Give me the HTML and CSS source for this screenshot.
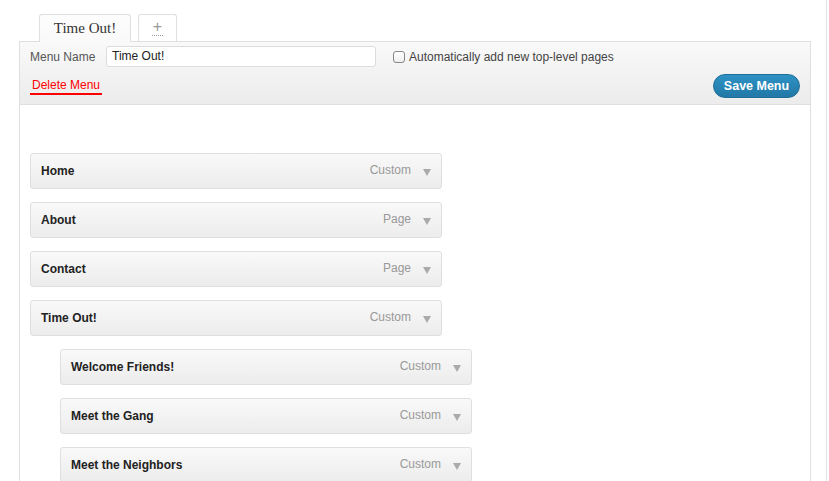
FILE: index.html
```html
<!DOCTYPE html>
<html>
<head>
<meta charset="utf-8">
<link rel="stylesheet" href="styles.css">
</head>
<body>
<div class="page">
  <div class="main">
    <div class="tabs">
      <div class="tab active">Time Out!</div>
      <div class="tab add"><span class="plus">+</span></div>
    </div>
    <div class="panel">
      <div class="header">
        <div class="row1">
          <label class="lbl">Menu Name</label>
          <div class="input">Time Out!</div>
          <span class="check"></span>
          <span class="auto">Automatically add new top-level pages</span>
        </div>
        <div class="row2">
          <span class="delete">Delete Menu</span>
          <span class="save">Save Menu</span>
        </div>
      </div>
      <div class="body">
        <div class="item"><span class="title">Home</span><span class="type">Custom</span><span class="arrow"></span></div>
        <div class="item"><span class="title">About</span><span class="type">Page</span><span class="arrow"></span></div>
        <div class="item"><span class="title">Contact</span><span class="type">Page</span><span class="arrow"></span></div>
        <div class="item"><span class="title">Time Out!</span><span class="type">Custom</span><span class="arrow"></span></div>
        <div class="item sub"><span class="title">Welcome Friends!</span><span class="type">Custom</span><span class="arrow"></span></div>
        <div class="item sub"><span class="title">Meet the Gang</span><span class="type">Custom</span><span class="arrow"></span></div>
        <div class="item sub"><span class="title">Meet the Neighbors</span><span class="type">Custom</span><span class="arrow"></span></div>
      </div>
    </div>
  </div>
  <div class="edge"></div>
</div>
</body>
</html>
```
FILE: styles.css
```css
html, body { margin: 0; padding: 0; background: #fff; }
body { font-family: "Liberation Sans", Arial, sans-serif; font-size: 12px; color: #333; overflow: hidden; }
.page { display: flex; height: 481px; }
.main { width: 826px; padding: 14px 15px 0 19px; box-sizing: border-box; }
.edge { width: 1px; background: #e3e3e3; }
.tabs { display: flex; padding-left: 20px; gap: 7px; height: 27px; position: relative; z-index: 1; }
.tab { box-sizing: border-box; height: 28px; border: 1px solid #dfdfdf; border-bottom: none; border-radius: 3px 3px 0 0; font-family: "Liberation Serif", Georgia, serif; font-size: 15px; color: #333; display: flex; justify-content: center; padding-top: 5px; }
.tab.active { width: 92px; background: linear-gradient(#fdfdfd, #f9f9f9); }
.tab.add { width: 39px; height: 27px; background: #fff; }
.plus { font-family: "Liberation Sans", Arial, sans-serif; color: #999; font-size: 16px; line-height: 14px; border-bottom: 1px dotted #999; height: 15px; padding: 0 1px; }
.panel { border: 1px solid #dfdfdf; border-bottom: none; height: 440px; box-sizing: border-box; }
.header { height: 62px; background: linear-gradient(#f9f9f9, #ececec); border-bottom: 1px solid #dfdfdf; box-sizing: content-box; padding: 0 10px; }
.row1 { display: flex; align-items: center; padding-top: 4px; height: 21px; }
.lbl { color: #555; font-size: 12px; width: 76px; }
.input { box-sizing: border-box; width: 270px; height: 21px; background: #fff; border: 1px solid #dcdcdc; border-radius: 3px; padding: 2px 5px; font-size: 12px; color: #222; line-height: 15px; }
.check { width: 10px; height: 10px; border: 1px solid #888; border-radius: 3px; background: linear-gradient(#fff, #eee); margin-left: 17px; margin-right: 4px; }
.auto { color: #444; font-size: 12px; }
.row2 { display: flex; justify-content: space-between; align-items: center; margin-top: 7px; }
.delete { color: #f00; font-size: 12px; border-bottom: 2px solid #f00; padding: 0 2px 1px; line-height: 14px; }
.save { width: 87px; height: 24px; border-radius: 12px; background: linear-gradient(#2e92c4, #2178a6); border: 1px solid #1f6d99; box-sizing: border-box; color: #fff; font-weight: bold; font-size: 12.5px; display: flex; align-items: center; justify-content: center; margin-top: 0; }
.body { padding: 48px 10px 0; }
.item { width: 412px; height: 36px; box-sizing: border-box; border: 1px solid #dfdfdf; border-radius: 3px; background: linear-gradient(#f9f9f9, #ececec); display: flex; align-items: center; padding: 0 10px; margin-bottom: 13px; }
.item.sub { margin-left: 30px; }
.title { font-weight: bold; color: #222; font-size: 12px; flex: 1; }
.type { color: #999; font-size: 12px; margin-top: -2px; }
.arrow { width: 0; height: 0; border-left: 4px solid transparent; border-right: 4px solid transparent; border-top: 7px solid #aaa; margin-left: 12px; margin-right: 0; margin-top: 2px; }
```
